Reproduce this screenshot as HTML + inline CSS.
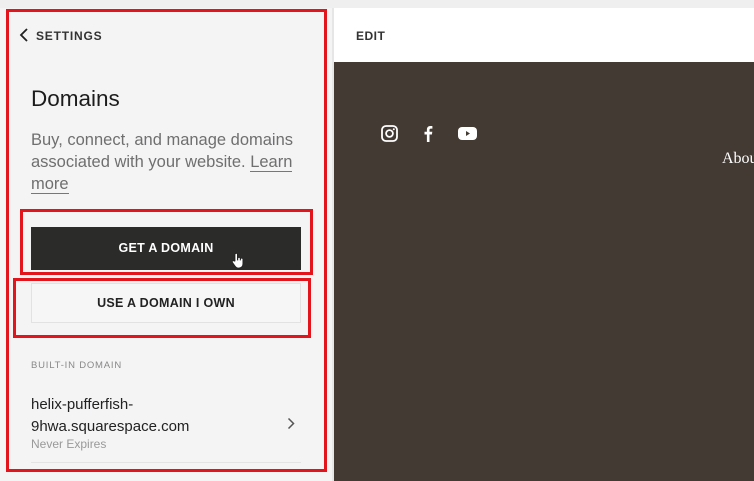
<!DOCTYPE html>
<html><head><style>
*{margin:0;padding:0;box-sizing:border-box}
body{width:754px;height:481px;overflow:hidden;background:#efefef;font-family:"Liberation Sans",sans-serif;position:relative}
.abs{position:absolute}
.left{left:0;top:8px;width:334px;height:473px;background:#f4f4f5}
.red{position:absolute;border:3px solid #e3141b}
.hdr{left:334px;top:8px;width:420px;height:54px;background:#fff}
.dark{left:334px;top:62px;width:420px;height:419px;background:#433a33}
</style></head><body>
<div class="abs left"></div>
<div class="abs hdr"></div>
<div class="abs dark"></div>
<div class="abs" style="left:332px;top:8px;width:2px;height:473px;background:#e6e6e6"></div>

<svg class="abs" style="left:19px;top:28px" width="10" height="14"><path d="M8 1L2 7l6 6" stroke="#222" stroke-width="1.8" fill="none"/></svg>
<div class="abs" style="left:36px;top:29px;font-size:12px;font-weight:bold;letter-spacing:0.8px;color:#333">SETTINGS</div>
<div class="abs" style="left:31px;top:86px;font-size:22.5px;color:#1c1c1c">Domains</div>
<div class="abs" style="left:31px;top:129px;width:290px;font-size:16.5px;line-height:22px;color:#6f6f6f">Buy, connect, and manage domains associated with your website. <span style="border-bottom:1px solid #777">Learn</span> <span style="border-bottom:1px solid #777">more</span></div>

<div class="abs" style="left:31px;top:227px;width:270px;height:43px;background:#2b2b2a;color:#fff;font-size:12.5px;font-weight:bold;letter-spacing:0.3px;text-align:center;line-height:43px">GET A DOMAIN</div>
<svg class="abs" style="left:231px;top:252px" width="14" height="17"><path d="M4 9V2.5a1.2 1.2 0 012.4 0V8h.4V6.5a1.2 1.2 0 012.4 0V8h.3V7.3a1.2 1.2 0 012.4 0v4.5c0 2.5-1.6 4.2-4 4.2H7.2c-1.5 0-2.4-.8-3.2-2L1.5 10.5a1.1 1.1 0 011.8-1.3z" fill="#fff" stroke="#222" stroke-width="0.8"/></svg>
<div class="abs" style="left:31px;top:283px;width:270px;height:40px;border:1px solid #e2e2e2;background:#f6f6f6;color:#222;font-size:12.5px;font-weight:bold;letter-spacing:0.3px;text-align:center;line-height:38px">USE A DOMAIN I OWN</div>

<div class="abs" style="left:31px;top:360px;font-size:9.5px;letter-spacing:0.8px;color:#888">BUILT-IN DOMAIN</div>
<div class="abs" style="left:31px;top:394px;font-size:15px;line-height:22px;color:#222">helix-pufferfish-<br>9hwa.squarespace.com</div>
<div class="abs" style="left:31px;top:437px;font-size:12px;color:#999">Never Expires</div>
<svg class="abs" style="left:287px;top:417px" width="8" height="13"><path d="M1.5 1.5l5 5-5 5" stroke="#555" stroke-width="1.5" fill="none"/></svg>
<div class="abs" style="left:31px;top:462px;width:270px;height:1px;background:#e4e4e4"></div>

<div class="red" style="left:6px;top:9px;width:321px;height:463px"></div>
<div class="red" style="left:20px;top:209px;width:293px;height:66px"></div>
<div class="red" style="left:13px;top:278px;width:298px;height:60px"></div>

<div class="abs" style="left:356px;top:29px;font-size:12px;font-weight:bold;letter-spacing:0.5px;color:#333">EDIT</div>
<svg class="abs" style="left:381px;top:125px" width="17" height="17"><rect x="1" y="1" width="15" height="15" rx="4" stroke="#fff" stroke-width="1.8" fill="none"/><circle cx="8.5" cy="8.5" r="3.4" stroke="#fff" stroke-width="1.8" fill="none"/><circle cx="12.8" cy="4.2" r="1" fill="#fff"/></svg>
<svg class="abs" style="left:423px;top:125px" width="10" height="17"><path d="M6.5 17V9.5h2.4l.4-2.8H6.5V5c0-.8.3-1.4 1.4-1.4h1.5V1.1C9.1 1 8.3 1 7.4 1 5.3 1 3.9 2.3 3.9 4.6v2.1H1.5v2.8h2.4V17z" fill="#fff"/></svg>
<svg class="abs" style="left:458px;top:126px" width="19" height="15"><rect x="0" y="1" width="19" height="13" rx="4" fill="#fff"/><path d="M8 5l4 2.5L8 10z" fill="#433a33"/></svg>
<div class="abs" style="left:722px;top:150px;font-family:'Liberation Serif',serif;font-size:16px;color:#fff">About</div>
</body></html>
